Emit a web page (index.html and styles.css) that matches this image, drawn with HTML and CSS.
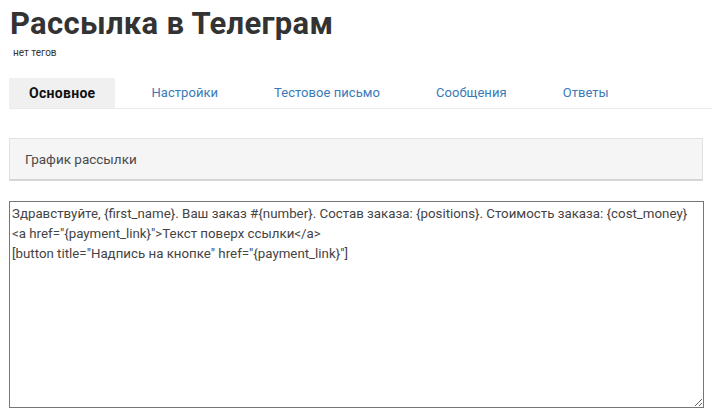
FILE: index.html
```html
<!DOCTYPE html>
<html lang="ru">
<head>
<meta charset="utf-8">
<title>Рассылка в Телеграм</title>
<link rel="stylesheet" href="styles.css">
</head>
<body>
<div class="page">
  <h1 class="title">Рассылка в Телеграм</h1>
  <div class="tags">нет тегов</div>
  <ul class="tabs">
    <li class="tab active">Основное</li>
    <li class="tab">Настройки</li>
    <li class="tab">Тестовое письмо</li>
    <li class="tab">Сообщения</li>
    <li class="tab">Ответы</li>
  </ul>
  <div class="panel">График рассылки</div>
  <textarea class="message">Здравствуйте, {first_name}. Ваш заказ #{number}. Состав заказа: {positions}. Стоимость заказа: {cost_money}
&lt;a href="{payment_link}"&gt;Текст поверх ссылки&lt;/a&gt;
[button title="Надпись на кнопке" href="{payment_link}"]</textarea>
</div>
</body>
</html>
```
FILE: styles.css
```css
html, body {
  margin: 0;
  padding: 0;
  background: #fff;
}
body {
  font-family: Roboto, "Liberation Sans", Arial, sans-serif;
  color: #333;
}
.page {
  padding: 0 9px 0 9px;
}
.title {
  margin: 0;
  padding: 6px 0 0 1px;
  font-size: 31px;
  letter-spacing: 0.3px;
  line-height: 36px;
  font-weight: 700;
  color: #333;
}
.tags {
  margin: 4px 0 0 4px;
  font-size: 10px;
  line-height: 14px;
  color: #333;
}
.tabs {
  list-style: none;
  margin: 18px -9px 0 0;
  padding: 0;
  display: flex;
  border-bottom: 1px solid #eaeaea;
}
.tab {
  padding: 0 20px;
  margin-right: 16px;
  height: 30px;
  line-height: 30px;
  font-size: 13px;
  letter-spacing: 0.05px;
  color: #3a7ab8;
}
.tab.active {
  background: #f0f0f0;
  color: #111;
  font-size: 14px;
  letter-spacing: 0.3px;
  font-weight: 700;
}
.panel {
  margin: 29px 0 0 0;
  height: 40px;
  line-height: 40px;
  padding: 0 15px;
  background: #f5f5f5;
  border: 1px solid #e0e0e0;
  border-bottom: 2px solid #d5d5d5;
  font-size: 13.5px;
  color: #4a4a4a;
}
.message {
  display: block;
  box-sizing: border-box;
  margin: 20px 0 0 0;
  width: 695px;
  height: 207px;
  padding: 2px 2px;
  border: 1px solid #767676;
  font-family: inherit;
  font-size: 13.3px;
  line-height: 20px;
  color: #444;
  resize: both;
}
```
